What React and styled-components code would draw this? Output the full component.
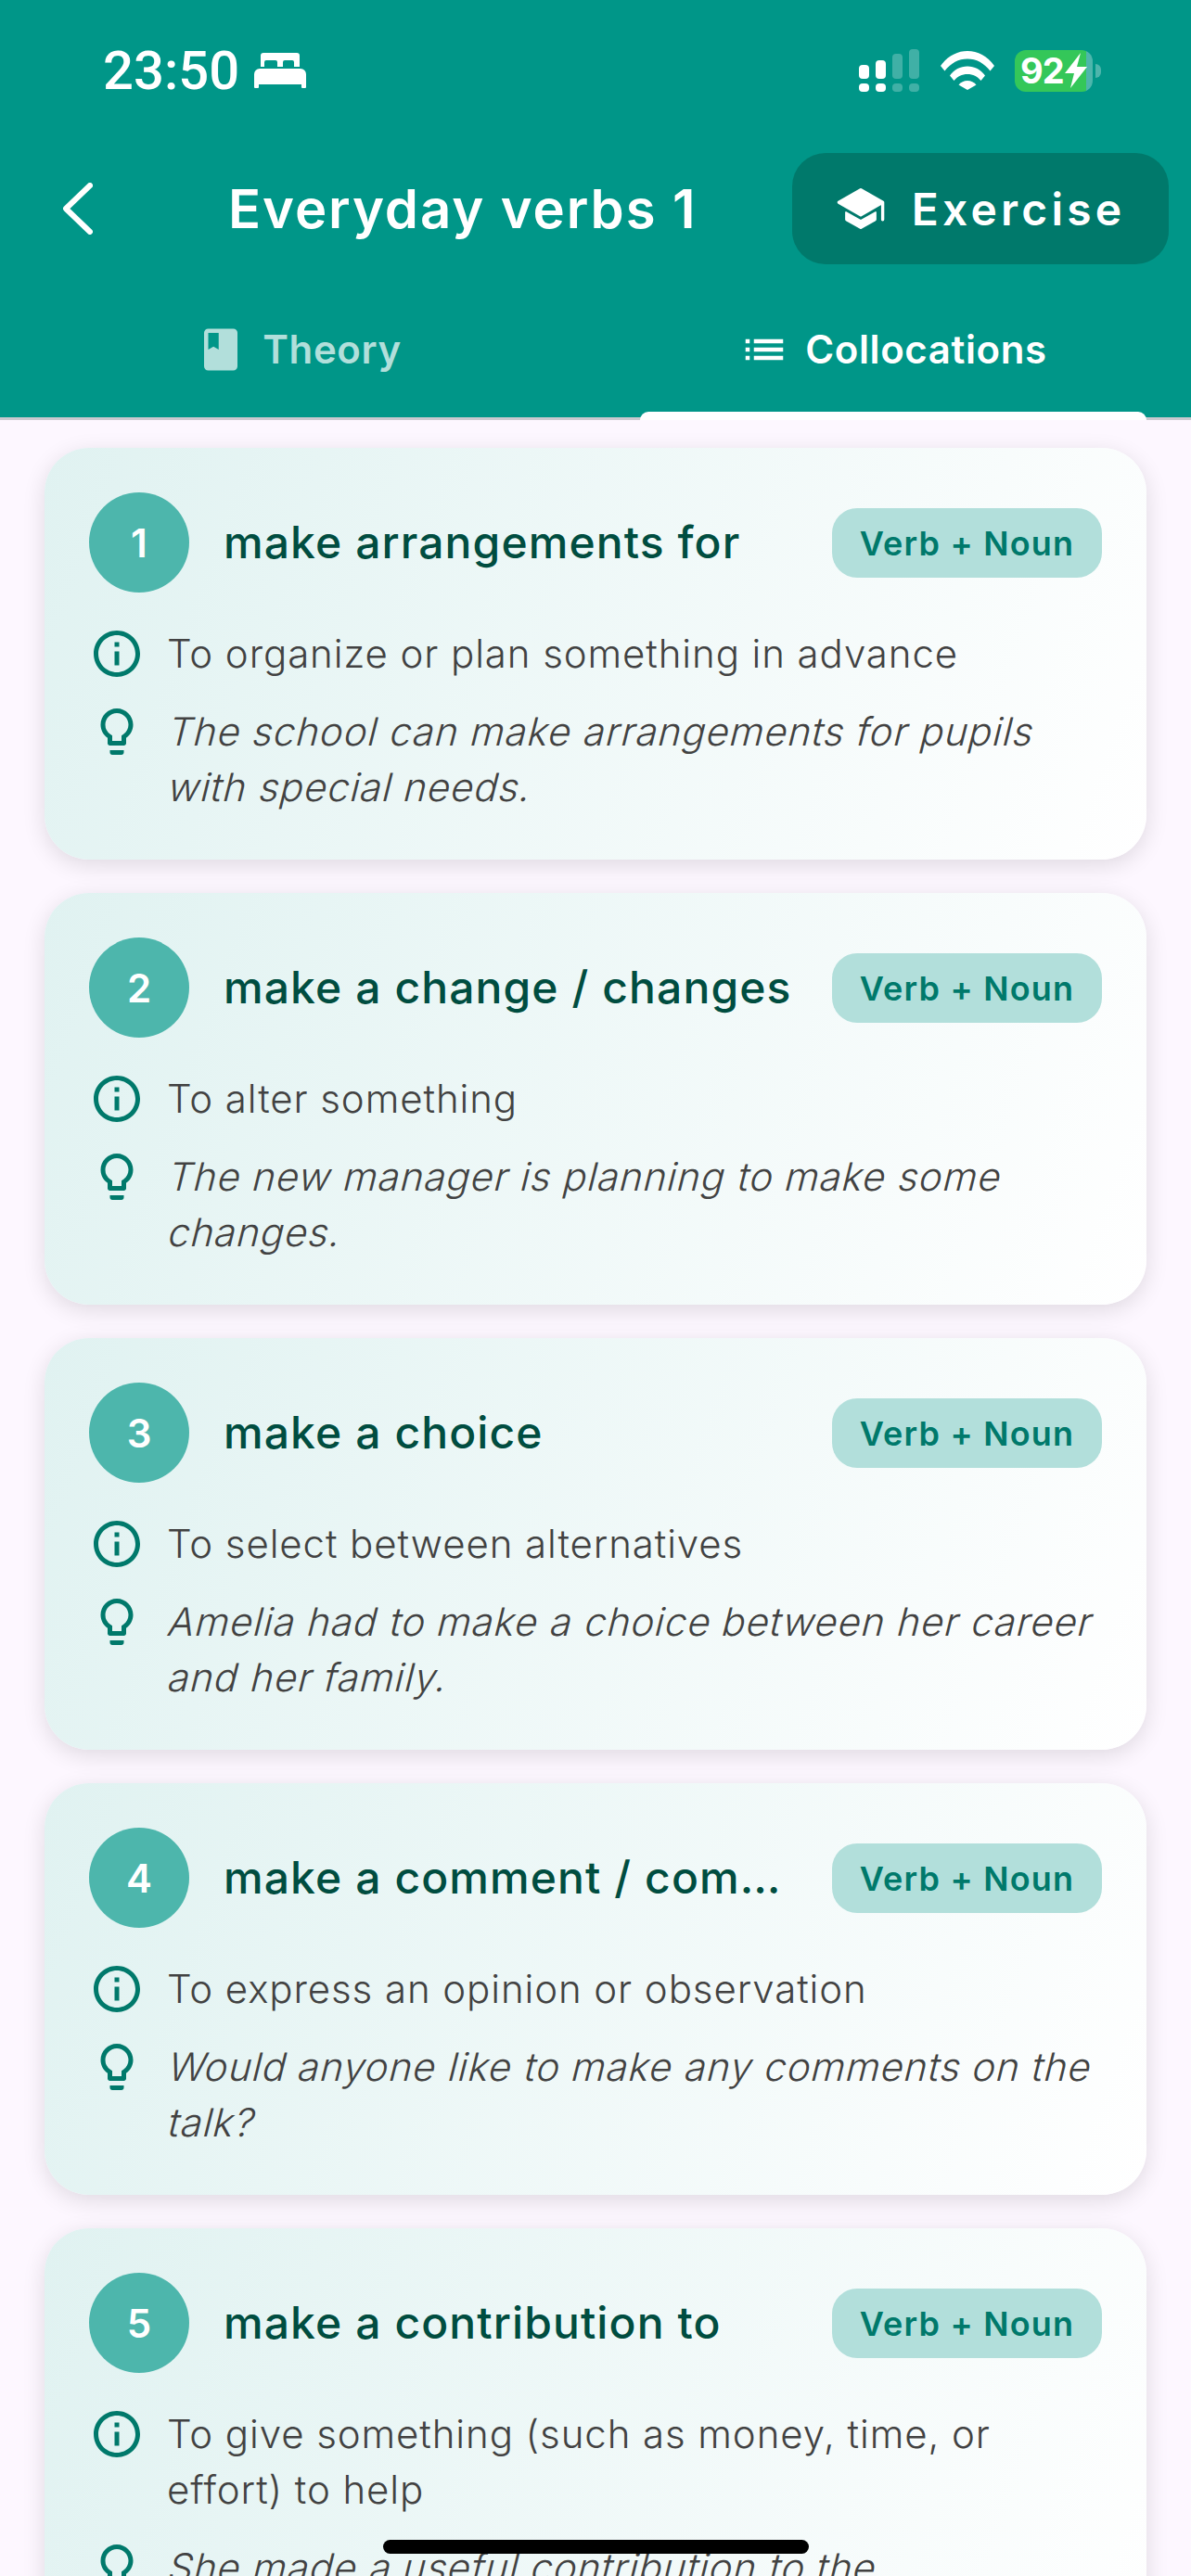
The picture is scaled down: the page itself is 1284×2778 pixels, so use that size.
import React from "react";
import styled, { createGlobalStyle } from "styled-components";
import { MdInfoOutline, MdOutlineLightbulb, MdBook, MdList } from "react-icons/md";
import { IoSchool } from "react-icons/io5";

const Global = createGlobalStyle`
  html, body { margin: 0; padding: 0; background: #fdf7ff; }
  * { box-sizing: border-box; }
`;

const Page = styled.div`
  position: relative;
  width: 1284px;
  height: 2778px;
  overflow: hidden;
  background: #fdf7ff;
  font-family: Inter, Roboto, "Liberation Sans", sans-serif;
`;

const Header = styled.header`
  background: #009688;
  border-bottom: 3px solid #c9c9cf;
  height: 453px;
  color: #fff;
`;

const StatusBar = styled.div`
  height: 150px;
  padding: 2px 97px 0 111px;
  display: flex;
  align-items: center;
  justify-content: space-between;
`;

const TimeGroup = styled.div`
  display: flex;
  align-items: center;
  gap: 16px;
  font-family: Roboto, sans-serif;
  font-size: 58px;
  font-weight: 500;
  line-height: 1;
`;

const StatusIcons = styled.div`
  display: flex;
  align-items: center;
  gap: 22px;
`;

const Battery = styled.div`
  width: 84px;
  height: 45px;
  border-radius: 12px;
  background: linear-gradient(90deg, #34c759 0 92%, rgba(255,255,255,.3) 92%);
  display: flex;
  align-items: center;
  padding-left: 6px;
  font-size: 38px;
  font-weight: 700;
  letter-spacing: -1px;
  line-height: 1;
  color: #fff;
`;

const BatteryWrap = styled.div`
  display: flex;
  align-items: center;
  gap: 3px;
`;

const BatteryNub = styled.div`
  width: 6px;
  height: 15px;
  border-radius: 0 8px 8px 0;
  background: rgba(255,255,255,.3);
`;

const NavRow = styled.div`
  height: 120px;
  margin-top: 15px;
  padding: 0 24px 0 68px;
  display: flex;
  align-items: center;
`;

const Back = styled.svg`
  width: 32px;
  height: 56px;
  flex: none;
`;

const Title = styled.h1`
  flex: 1;
  margin: 0;
  padding-left: 146px;
  font-size: 58px;
  font-weight: 600;
  letter-spacing: 1.9px;
  white-space: nowrap;
`;

const ExerciseButton = styled.button`
  width: 406px;
  height: 120px;
  border: 0;
  border-radius: 36px;
  background: #00796b;
  color: #fff;
  display: flex;
  align-items: center;
  justify-content: center;
  gap: 28px;
  font-family: inherit;
  font-size: 48px;
  font-weight: 600;
  letter-spacing: 4.2px;
`;

const Tabs = styled.nav`
  height: 165px;
  padding: 0 48px;
  display: grid;
  grid-template-columns: 548px 546px;
  column-gap: 94px;
`;

const Tab = styled.div`
  position: relative;
  display: flex;
  align-items: center;
  justify-content: center;
  gap: ${p => (p.$active ? "17px" : "18px")};
  padding-top: 18px;
  font-size: 42px;
  font-weight: 600;
  letter-spacing: .6px;
  color: ${p => (p.$active ? "#fff" : "#b2dfdb")};
`;

const Indicator = styled.span`
  position: absolute;
  left: 0;
  right: 0;
  bottom: -3px;
  height: 9px;
  border-radius: 9px 9px 0 0;
  background: #fff;
`;

const List = styled.main`
  padding: 30px 48px 0;
  display: flex;
  flex-direction: column;
  gap: 36px;
`;

const Card = styled.article`
  padding: 48px;
  border-radius: 48px;
  background: linear-gradient(110deg, #e0f2f1 0%, #ffffff 100%);
  box-shadow: 0 6px 24px rgba(0, 0, 0, .12);
`;

const CardHead = styled.div`
  display: flex;
  align-items: center;
  gap: 37px;
  margin-bottom: 36px;
`;

const NumberBadge = styled.div`
  flex: none;
  width: 108px;
  height: 108px;
  border-radius: 50%;
  background: #4db6ac;
  color: #fff;
  display: flex;
  align-items: center;
  justify-content: center;
  font-size: 42px;
  font-weight: 600;
`;

const Phrase = styled.h2`
  flex: 1;
  min-width: 0;
  margin: 0 0 2px;
  font-size: 48px;
  font-weight: 500;
  letter-spacing: 1.1px;
  color: #004d40;
  white-space: nowrap;
  overflow: hidden;
  text-overflow: ellipsis;
`;

const Chip = styled.div`
  flex: none;
  width: 291px;
  height: 75px;
  padding-top: 2px;
  border-radius: 27px;
  background: #b2dfdb;
  color: #00796b;
  display: flex;
  align-items: center;
  justify-content: center;
  font-size: 36px;
  font-weight: 600;
  letter-spacing: 1.2px;
`;

const Row = styled.div`
  display: flex;
  align-items: flex-start;
  gap: 24px;
  margin-top: ${p => (p.$example ? "24px" : "0")};
  color: #00796b;
  svg { flex: none; }
`;

const Meaning = styled.p`
  margin: 0;
  font-size: 42px;
  font-weight: 300;
  line-height: 60px;
  letter-spacing: .9px;
  color: #424242;
`;

const Word = styled.span`
  display: inline-block;
  transform: skewX(-14deg);
  transform-origin: 0 40px;
`;

const HomeIndicator = styled.div`
  position: absolute;
  left: 413px;
  top: 2739px;
  width: 459px;
  height: 15px;
  border-radius: 8px;
  background: #000;
`;

const items = [
  ["make arrangements for", "To organize or plan something in advance", "The school can make arrangements for pupils with special needs."],
  ["make a change / changes", "To alter something", "The new manager is planning to make some changes."],
  ["make a choice", "To select between alternatives", "Amelia had to make a choice between her career and her family."],
  ["make a comment / comments", "To express an opinion or observation", "Would anyone like to make any comments on the talk?"],
  ["make a contribution to", "To give something (such as money, time, or effort) to help", "She made a useful contribution to the development of the project."],
];

const Bed = () => (
  <svg width="56" height="38" viewBox="0 0 56 38" fill="#fff">
    <path d="M7 3a3 3 0 0 1 3-3h36a3 3 0 0 1 3 3v12h-6v-5a2 2 0 0 0-2-2H33a2 2 0 0 0-2 2v5h-6v-5a2 2 0 0 0-2-2H13a2 2 0 0 0-2 2v5H7z" />
    <path d="M6 17h44a6 6 0 0 1 6 6v14a1 1 0 0 1-1 1h-3a1 1 0 0 1-1-1v-3H5v3a1 1 0 0 1-1 1H1a1 1 0 0 1-1-1V23a6 6 0 0 1 6-6z" />
  </svg>
);

const Signal = () => (
  <svg width="66" height="46" viewBox="0 0 66 46" fill="#fff">
    <rect x="0" y="17" width="11" height="15" rx="4" />
    <rect x="0" y="37" width="11" height="9" rx="4" />
    <rect x="18" y="12" width="11" height="20" rx="4" />
    <rect x="18" y="37" width="11" height="9" rx="4" />
    <g opacity=".25">
      <rect x="36" y="5" width="11" height="27" rx="4" />
      <rect x="36" y="37" width="11" height="9" rx="4" />
      <rect x="54" y="0" width="11" height="32" rx="4" />
      <rect x="54" y="37" width="11" height="9" rx="4" />
    </g>
  </svg>
);

const Wifi = () => (
  <svg width="58" height="42" viewBox="0 0 58 42" fill="#fff">
    <path d="M0 16C7.5 5.5 18 0 29 0s21.500 5.500 29 16l-4.500 5.500C47 13 38.500 8.500 29 8.500S11 13 4.500 21.500z" />
    <path d="M10 26.500C14.500 20 21.500 16.500 29 16.500s14.500 3.500 19 10L43.500 32C40 27.500 34.800 25 29 25s-11 2.500-14.500 7z" />
    <path d="M19.500 36.500C22 33.500 25.200 32 29 32s7 1.500 9.500 4.500L29 42z" />
  </svg>
);

const Bolt = () => (
  <svg width="26" height="38" viewBox="0 0 26 38" fill="#fff">
    <path d="M18 0 1 22h10L7 38l18-23H14z" />
  </svg>
);

export default function App() {
  return (
    <Page>
      <Global />
      <Header>
        <StatusBar>
          <TimeGroup>23:50 <Bed /></TimeGroup>
          <StatusIcons>
            <Signal />
            <Wifi />
            <BatteryWrap>
              <Battery>92<Bolt /></Battery>
              <BatteryNub />
            </BatteryWrap>
          </StatusIcons>
        </StatusBar>
        <NavRow>
          <Back viewBox="0 0 32 56" fill="none" stroke="#fff" strokeWidth="6" strokeLinecap="round" strokeLinejoin="round">
            <path d="M29 3 3 28l26 25" />
          </Back>
          <Title>Everyday verbs 1</Title>
          <ExerciseButton><IoSchool size={54} />Exercise</ExerciseButton>
        </NavRow>
        <Tabs>
          <Tab><MdBook size={54} />Theory</Tab>
          <Tab $active><MdList size={54} />Collocations<Indicator /></Tab>
        </Tabs>
      </Header>
      <List>
        {items.map(([phrase, meaning, example], i) => (
          <Card key={phrase}>
            <CardHead>
              <NumberBadge>{i + 1}</NumberBadge>
              <Phrase>{phrase}</Phrase>
              <Chip>Verb + Noun</Chip>
            </CardHead>
            <Row>
              <MdInfoOutline size={60} />
              <Meaning>{meaning}</Meaning>
            </Row>
            <Row $example>
              <MdOutlineLightbulb size={60} />
              <Meaning>
                {example.split(" ").map((w, k) => (
                  <React.Fragment key={k}><Word>{w}</Word>{" "}</React.Fragment>
                ))}
              </Meaning>
            </Row>
          </Card>
        ))}
      </List>
      <HomeIndicator />
    </Page>
  );
}
